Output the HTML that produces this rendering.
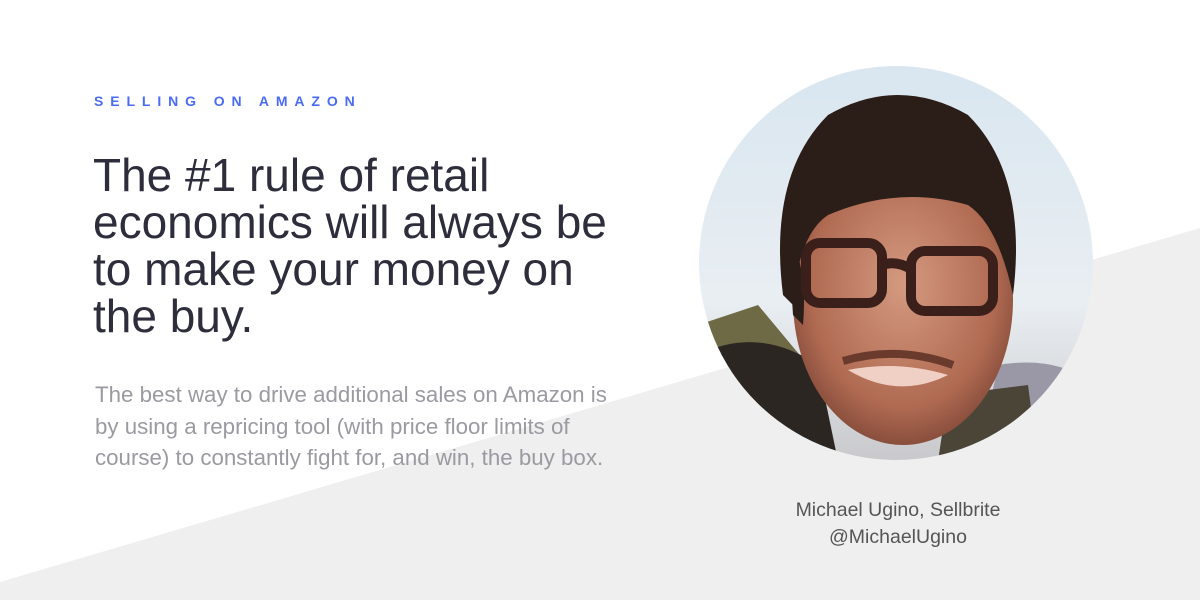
<!DOCTYPE html>
<html><head><meta charset="utf-8"><style>
*{margin:0;padding:0;box-sizing:border-box}
body{width:1200px;height:600px;overflow:hidden;background:#fff;position:relative;font-family:"Liberation Sans",sans-serif}
.bg{position:absolute;left:0;top:0}
.label{position:absolute;left:94px;top:93px;font-size:14px;font-weight:bold;letter-spacing:6.9px;color:#4a6cf5;white-space:nowrap}
h1{position:absolute;left:93px;top:152px;font-size:46px;font-weight:normal;line-height:47px;color:#2d2d3c;white-space:nowrap}
p{position:absolute;left:95px;top:379px;font-size:22.3px;line-height:31.5px;color:#9a9aa0;white-space:nowrap}
.cap{position:absolute;left:748px;width:300px;text-align:center;top:497px;font-size:19.5px;line-height:27px;color:#555}
.photo{position:absolute;left:698px;top:65px}
</style></head><body>
<svg class="bg" width="1200" height="600"><polygon points="0,582 1200,228 1200,600 0,600" fill="#efefef"/></svg>
<div class="label">SELLING ON AMAZON</div>
<h1>The #1 rule of retail<br>economics will always be<br>to make your money on<br>the buy.</h1>
<p>The best way to drive additional sales on Amazon is<br>by using a repricing tool (with price floor limits of<br>course) to constantly fight for, and win, the buy box.</p>
<div class="cap">Michael Ugino, Sellbrite<br>@MichaelUgino</div>
<svg class="photo" width="396" height="396" viewBox="0 0 396 396">
<defs>
<clipPath id="c"><circle cx="198" cy="198" r="197"/></clipPath>
<linearGradient id="sky" x1="0" y1="0" x2="0" y2="1"><stop offset="0" stop-color="#d9e6f0"/><stop offset="0.6" stop-color="#e9eef2"/><stop offset="1" stop-color="#c9c9cc"/></linearGradient>
<radialGradient id="skin" cx="0.5" cy="0.45" r="0.6"><stop offset="0" stop-color="#d49a80"/><stop offset="0.7" stop-color="#b06a52"/><stop offset="1" stop-color="#7a4434"/></radialGradient>
</defs>
<g clip-path="url(#c)">
<rect width="396" height="396" fill="url(#sky)"/>
<path d="M0 260 L60 240 L110 300 L0 396Z" fill="#6d6a45"/>
<path d="M0 290 Q60 260 120 300 L140 396 L0 396Z" fill="#2c2622"/>
<path d="M300 300 Q360 290 396 320 L396 396 L280 396Z" fill="#9a98a6"/>
<path d="M250 330 L330 320 L340 396 L240 396Z" fill="#4a4536"/>
<ellipse cx="205" cy="235" rx="110" ry="145" fill="url(#skin)"/>
<path d="M85 230 Q70 110 130 50 Q200 10 270 50 Q330 110 315 230 Q300 160 270 140 Q200 120 130 150 Q100 170 95 240Z" fill="#2b1d17"/>
<path d="M90 170 Q110 200 105 260 L95 250Z" fill="#2b1d17"/>
<g fill="none" stroke="#3a1f1a" stroke-width="10">
<rect x="108" y="178" width="76" height="60" rx="14"/>
<rect x="213" y="186" width="82" height="60" rx="14"/>
<path d="M184 200 Q198 195 213 204"/>
</g>
<path d="M150 305 Q200 295 250 310 Q200 335 150 305Z" fill="#f0d0c4"/>
<path d="M145 296 Q200 280 255 300" stroke="#6a3a2c" stroke-width="8" fill="none"/>
</g>
</svg>
</body></html>
